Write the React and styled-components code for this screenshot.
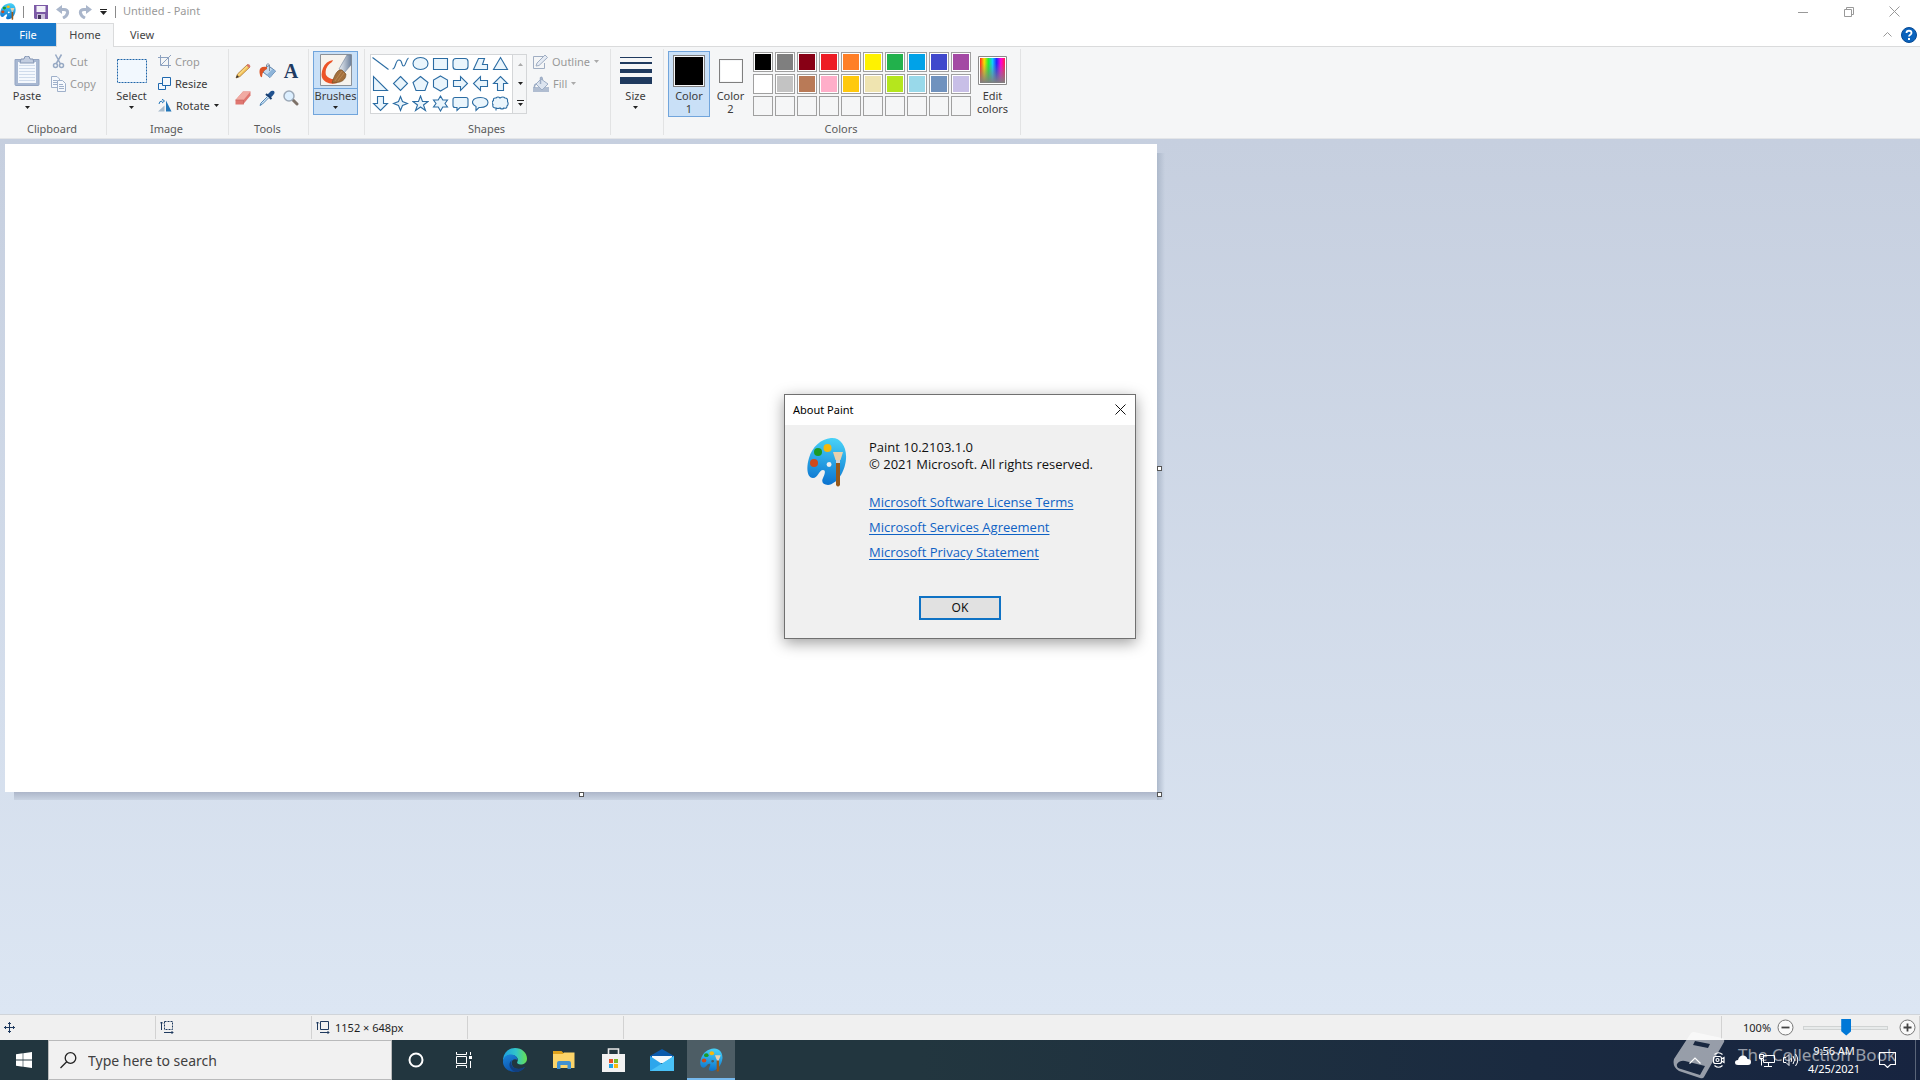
import React, { useState } from "react";
import styled, { createGlobalStyle, css } from "styled-components";

const GlobalStyle = createGlobalStyle`
  *, *::before, *::after { box-sizing: border-box; }
  body { margin: 0; overflow: hidden; font-family: "Noto Sans", "Open Sans", sans-serif; font-size: 11px; line-height: 13px; color: #3c3c3c; }
  button, input { font: inherit; color: inherit; margin: 0; padding: 0; border: 0; background: none; border-radius: 0; }
  svg { display: block; flex: none; }
`;

const Desktop = styled.div`
  position: relative;
  height: 100vh;
  display: flex;
  flex-direction: column;
`;

/* ---------- title bar ---------- */
const TitleBar = styled.header`
  height: 23px;
  display: flex;
  align-items: center;
  background: #fff;
`;
const QuickTools = styled.div`
  display: flex;
  align-items: center;
  gap: 8px;
  padding-left: 10px;
`;
const BarLine = styled.span`
  width: 1px;
  height: 12px;
  background: #8a8a8a;
  margin-left: ${(p) => p.$gap || 0}px;
`;
const IconButton = styled.button`
  display: flex;
  align-items: center;
  justify-content: center;
  width: ${(p) => p.$w || 14}px;
  height: ${(p) => p.$h || 20}px;
`;
const Title = styled.h1`
  flex: 1;
  margin: 0;
  padding: 0 0 2px 7px;
  font-size: 11px;
  line-height: 20px;
  font-weight: 400;
  color: #999;
`;
const WindowButtons = styled.div`
  display: flex;
  padding-right: 3px;
`;

/* ---------- tabs ---------- */
const Tabs = styled.nav`
  height: 24px;
  display: flex;
  background: #fff;
  border-bottom: 1px solid #dadbdc;
`;
const Tab = styled.button`
  width: ${(p) => p.$w}px;
  height: 23px;
  color: #444;
  ${(p) => p.$kind === "file" && css`background: #1979ca; color: #fff;`}
  ${(p) => p.$kind === "active" && css`
    height: 24px;
    background: #f5f6f7;
    border: 1px solid #dadbdc;
    border-bottom: 0;
    padding-bottom: 2px;
  `}
`;
const TabsEnd = styled.div`
  margin-left: auto;
  display: flex;
  align-items: center;
  gap: 7px;
  padding-right: 3px;
`;

/* ---------- ribbon ---------- */
const Ribbon = styled.section`
  display: flex;
  height: 92px;
  background: #f5f6f7;
  border-bottom: 1px solid #e3e5e8;
`;
const Group = styled.section`
  display: flex;
  flex-direction: column;
  width: ${(p) => p.$w}px;
  padding-top: 4px;
  background: linear-gradient(#e2e3e4, #e2e3e4) right 2px / 1px 86px no-repeat;
`;
const GroupBody = styled.div`
  display: flex;
  height: 68px;
  padding-left: ${(p) => p.$pad || 0}px;
  gap: ${(p) => p.$gap || 0}px;
`;
const GroupName = styled.h2`
  margin: 3px 3px 0 0;
  text-align: center;
  font-size: 11px;
  line-height: 14px;
  font-weight: 400;
  color: #5a5a5a;
`;
const BigButton = styled.button`
  width: ${(p) => p.$w}px;
  height: ${(p) => p.$h || 66}px;
  display: flex;
  flex-direction: column;
  align-items: center;
  white-space: nowrap;
  border: 1px solid transparent;
  ${(p) => p.$on && css`background: #c9e0f7; border-color: #71a5dc;`}
`;
const BigIcon = styled.span`
  height: 37px;
  display: flex;
  align-items: center;
  justify-content: center;
`;
const BrushIcon = styled(BigIcon)`
  align-self: stretch;
  border-bottom: 1px solid #71a5dc;
`;
const Stack = styled.div`
  display: flex;
  flex-direction: column;
`;
const SmallButton = styled.button`
  height: 22px;
  padding-bottom: 1px;
  display: flex;
  align-items: center;
  gap: ${(p) => p.$gap || 4}px;
  white-space: nowrap;
  color: ${(p) => (p.$off ? "#999" : "#3c3c3c")};
`;
const ToolGrid = styled.div`
  display: grid;
  grid-template-columns: repeat(3, 24px);
  grid-auto-rows: 27px;
  padding-top: 6px;
`;
const Gallery = styled.div`
  display: flex;
  width: 157px;
  height: 60px;
  margin: 3px 6px 0 0;
  border: 1px solid #d4d6d8;
  background: #fff;
`;
const ShapeGrid = styled.div`
  display: grid;
  grid-template-columns: repeat(7, 20px);
  grid-auto-rows: 20px;
  width: 141px;
`;
const GalleryScroll = styled.div`
  display: flex;
  flex-direction: column;
  width: 14px;
  background: #f5f6f7;
  border-left: 1px solid #d4d6d8;
`;
const ShapeButton = styled.button`
  width: 19px;
  height: 17px;
  display: grid;
  place-items: center;
`;
const ColorWell = styled.span`
  width: ${(p) => p.$s}px;
  height: ${(p) => p.$s}px;
  border: 1px solid #7f7f7f;
  background: ${(p) => p.$c};
  box-shadow: inset 0 0 0 1px #f5f6f7;
`;
const Palette = styled.div`
  display: grid;
  grid-template-columns: repeat(10, 20px);
  grid-auto-rows: 20px;
  gap: 2px;
  padding: 1px 0 0 2px;
`;
const Swatch = styled.button`
  border: 1px solid #a0a0a0;
  background: ${(p) => p.$c || "#f5f6f7"};
  box-shadow: inset 0 0 0 1px ${(p) => (p.$c ? "#fff" : "#f5f6f7")};
`;

/* ---------- drawing area ---------- */
const Workspace = styled.main`
  flex: 1;
  min-height: 0;
  padding: 5px;
  background: linear-gradient(#c6cfdf, #dce6f3);
`;
const Sheet = styled.div`
  position: relative;
  width: 1152px;
  height: 648px;
  background: #fff;
  &::before, &::after { content: ""; position: absolute; }
  &::before { left: 100%; top: 9px; width: 8px; bottom: -8px; background: linear-gradient(90deg, #adb9cb, #adb9cb00); }
  &::after { top: 100%; left: 9px; height: 8px; right: 0; background: linear-gradient(#adb6c9, #c9d3e2); }
`;
const Handle = styled.span`
  position: absolute;
  z-index: 1;
  width: 5px;
  height: 5px;
  border: 1px solid #555;
  background: #fff;
  left: ${(p) => p.$x};
  top: ${(p) => p.$y};
`;

/* ---------- status bar ---------- */
const StatusBar = styled.footer`
  height: 26px;
  display: flex;
  border-top: 1px solid #d0d4d9;
  background: #f0f0f0;
  color: #1e1e1e;
`;
const StatusCell = styled.div`
  width: 156px;
  display: flex;
  align-items: center;
  gap: 5px;
  padding-left: 4px;
  margin: 1px 0;
  border-right: 1px solid #d2d2d2;
`;
const Zoom = styled.div`
  margin: 1px 0 1px auto;
  width: 199px;
  display: flex;
  align-items: center;
  padding-left: 21px;
  border-left: 1px solid #d2d2d2;
  border-right: 1px solid #d2d2d2;
`;
const ZoomValue = styled.span`
  width: 34px;
`;
const ZoomSlider = styled.input`
  appearance: none;
  width: 85px;
  height: 18px;
  margin: 0 11px 0 9px;
  &::-webkit-slider-runnable-track { height: 4px; background: #e7eaea; border: 1px solid #d0d3d3; }
  &::-webkit-slider-thumb {
    appearance: none;
    width: 10px;
    height: 17px;
    margin-top: -8px;
    background: #0078d7;
    clip-path: polygon(0 0, 100% 0, 100% 75%, 50% 100%, 0 75%);
  }
`;

/* ---------- taskbar ---------- */
const Taskbar = styled.footer`
  position: relative;
  height: 40px;
  display: flex;
  background: linear-gradient(90deg, #22363f 0%, #22363f 48%, #1a2a40 80%, #172440 100%);
  color: #fff;
`;
const TaskButton = styled.button`
  width: ${(p) => p.$w || 48}px;
  height: 40px;
  display: grid;
  place-items: center;
  ${(p) => p.$on && css`background: #4d5d65; box-shadow: inset 0 -2px #76b9ed;`}
`;
const Search = styled.label`
  width: 344px;
  display: flex;
  align-items: center;
  gap: 11px;
  padding-left: 11px;
  background: #f1f1f1;
  border: 1px solid #b9babb;
`;
const SearchInput = styled.input`
  flex: 1;
  min-width: 0;
  font-size: 14px;
  outline: 0;
  &::placeholder { color: #404040; opacity: 1; }
`;
const Pinned = styled.div`
  display: flex;
  padding-left: 3px;
  gap: 1px;
`;
const Tray = styled.div`
  position: relative;
  margin-left: auto;
  display: flex;
  padding-right: 4px;
`;
const Clock = styled.button`
  width: 62px;
  height: 40px;
  line-height: 18px;
  text-align: center;
  white-space: nowrap;
`;
const DesktopEdge = styled.button`
  width: 1px;
  margin-left: 6px;
  background: #5a6579;
`;
const Watermark = styled.div`
  position: absolute;
  right: 24px;
  bottom: 1px;
  display: flex;
  align-items: flex-start;
  gap: 13px;
  opacity: 0.55;
  pointer-events: none;
  color: #fff;
`;
const WatermarkText = styled.span`
  padding-top: 12px;
  font-size: 17px;
  line-height: 22px;
  white-space: nowrap;
`;

/* ---------- dialog ---------- */
const DialogLayer = styled.div`
  position: absolute;
  inset: 0 0 48px;
  display: grid;
  place-items: center;
  pointer-events: none;
`;
const Dialog = styled.section`
  width: 352px;
  pointer-events: auto;
  border: 1px solid #707070;
  background: #f0f0f0;
  color: #111;
  box-shadow: 0 4px 14px rgba(0, 0, 0, 0.38);
`;
const DialogHead = styled.header`
  height: 30px;
  display: flex;
  align-items: center;
  justify-content: space-between;
  padding: 0 4px 0 8px;
  background: #fff;
  color: #000;
`;
const DialogTitle = styled.h2`
  margin: 0;
  font-size: 11px;
  font-weight: 400;
`;
const DialogBody = styled.div`
  display: grid;
  grid-template-columns: 62px 1fr;
  padding: 12px 0 0 22px;
  font-family: "Open Sans", "Noto Sans", sans-serif;
  font-size: 13px;
  line-height: 17px;
`;
const DialogText = styled.p`
  margin: 2px 0 0;
`;
const Links = styled.div`
  display: flex;
  flex-direction: column;
  align-items: flex-start;
  gap: 8px;
  padding-top: 21px;
`;
const Link = styled.a`
  color: #0f62c4;
  text-decoration: underline;
  text-underline-offset: 2px;
`;
const DialogFoot = styled.div`
  display: flex;
  justify-content: center;
  padding: 35px 0 18px;
`;
const OkButton = styled.button`
  width: 82px;
  height: 24px;
  background: #e1e1e1;
  border: 2px solid #0f72c4;
  font-size: 12px;
  color: #111;
`;

/* ---------- drawings ---------- */
const Arrow = ({ c = "#222" }) => (
  <svg width="5" height="3" viewBox="0 0 5 3"><path d="M0 0h5L2.500 3z" fill={c} /></svg>
);
const BigArrow = styled.span`
  padding-top: 4px;
`;

const PaintIcon = ({ w, h, id }) => (
  <svg width={w} height={h} viewBox="0 0 40 50" preserveAspectRatio="none">
    <defs>
      <linearGradient id={id} x1="0.6" y1="0" x2="0.5" y2="1">
        <stop offset="0" stopColor="#48d2f7" /><stop offset="1" stopColor="#0a72cf" />
      </linearGradient>
    </defs>
    <path fillRule="evenodd" fill={`url(#${id})`} d="M24 1C33 0 40 9 39 22c-1 13-9 25-18 26-5 0-7-3-5-7 2-4 3-8 0-8-4 0-5 8-10 8C0 41-1 31 2 21 5 10 14 2 24 1zM22 25a2.500 2.500 0 1 0 .1 5 2.500 2.500 0 0 0-.1-5z" />
    <circle cx="20.500" cy="11" r="4" fill="#f5b90c" /><circle cx="11" cy="15" r="4" fill="#1c9a25" /><circle cx="7" cy="26" r="4" fill="#cf4a1c" />
    <path d="M29 25h4v23q-2 3-4 0z" fill="#96591b" /><path d="M29 22h4v4h-4z" fill="#cfd3d6" /><path d="M26 15h10l-2.500 8h-5z" fill="#ead0ac" />
  </svg>
);
const SaveIcon = () => (
  <svg width="14" height="14" viewBox="0 0 14 14"><path d="M0 0h14v14H1l-1-1z" fill="#7c5aa6" /><path d="M2.500 1h9v6h-9z" fill="#f3f1f8" /><path d="M3 9h8v5H3z" fill="#c9bfd9" /><path d="M4 10h3v4H4z" fill="#44345e" /></svg>
);
const UndoIcon = ({ flip }) => (
  <svg width="14" height="14" viewBox="0 0 14 14"><g transform={flip ? "translate(14 0) scale(-1 1)" : undefined} fill="none" stroke="#aab6cb" strokeWidth="3"><path d="M3 4.500h5c5 0 5 5.500-1 8.500" /><path d="M6 0v9L0 4.500z" fill="#aab6cb" stroke="none" /></g></svg>
);
const PasteIcon = () => (
  <svg width="26" height="30" viewBox="0 0 26 30"><path d="M1 3.500h24v25q0 1-1 1H2q-1 0-1-1z" fill="#a8b8d2" stroke="#93a5c3" /><path d="M4 6h18v21H4z" fill="#f4f8fd" /><path d="M5 9.500h16M5 12.500h16M5 15.500h16M5 18.500h16M5 21.500h16M5 24.500h16" stroke="#cfdbeb" /><path d="M7 3h3a3 3 0 0 1 6 0h3l1 4H6z" fill="#c2cde0" stroke="#8597b5" /></svg>
);
const CutIcon = () => (
  <svg width="14" height="15" viewBox="0 0 14 15" fill="none" stroke="#97a9c4" strokeWidth="1.500"><path d="M4.500.5L9.500 10M10.500.5L5 10" /><circle cx="4.500" cy="11.500" r="2" /><circle cx="10.500" cy="11.500" r="2" /></svg>
);
const CopyIcon = () => (
  <svg width="15" height="16" viewBox="0 0 15 16" fill="#f6f9fd" stroke="#9fb0ca"><path d="M.5.500H6L8.500 3v8.500h-8z" /><path d="M2 4.500h4M2 6.500h4M2 8.500h4" /><path d="M6.500 4.500h5l3 3v8h-8z" /><path d="M8 8.500h4M8 10.500h5M8 12.500h5" /></svg>
);
const SelectIcon = () => (
  <svg width="30" height="24" viewBox="0 0 30 24"><path d="M.5.500h29v23H.5z" fill="#f2f8fe" stroke="#1f65a8" strokeDasharray="2 1" /></svg>
);
const CropIcon = () => (
  <svg width="13" height="13" viewBox="0 0 13 13" fill="none" stroke="#8da2c0"><path d="M2.500 0v10.500H13M0 2.500h10.500V13M3 10l7-7M10 3l3-3" /></svg>
);
const ResizeIcon = () => (
  <svg width="13" height="13" viewBox="0 0 13 13" fill="#f5f9fd" stroke="#1f68ae"><path d="M.5 6.500h7v6h-7z" /><path d="M4.500.500h8v8h-8z" /></svg>
);
const RotateIcon = () => (
  <svg width="14" height="13" viewBox="0 0 14 13"><path d="M8 12.500V1.500l5.500 11z" fill="#2376b9" /><path d="M6.500 12.500V6.500L0 12.500z" fill="#a8bccd" /><path d="M1 5q0-3 3.500-3M4 0l2.500 2L4 4" fill="none" stroke="#2376b9" /></svg>
);
const Pencil = () => (
  <svg width="16" height="16" viewBox="0 0 16 16"><path d="M1 15l1.500-4L12.500 1.500 15 4 5 13.500z" fill="#f5c65c" stroke="#a56d28" strokeWidth=".7" /><path d="M3.500 12L13 2.500" stroke="#fbe6a3" /><path d="M11.500 2.500l1.500-1.500q2 0 2.500 2.500L14 5z" fill="#d9776a" /><path d="M1 15l1-3 2 2z" fill="#333" /></svg>
);
const Bucket = () => (
  <svg width="17" height="16" viewBox="0 0 17 16"><path d="M9 2.500l7.500 5.500L11 14.500 4 9z" fill="#c3dbf0" stroke="#587ea8" /><path d="M11 14.500l5.500-6.500-3 -2-6 6z" fill="#8db4d9" /><path d="M7.500 6V2q1.500-3 3 0v6" fill="none" stroke="#7b8a9c" /><path d="M8 4Q0 3 .5 9 1 15 3 14q0-6 5-8z" fill="#dd5426" /></svg>
);
const TextTool = styled.span`
  font: 700 20px/18px "Liberation Serif", serif;
  color: #1f3b63;
`;
const Eraser = () => (
  <svg width="16" height="14" viewBox="0 0 16 14"><path d="M.5 9L8 .5h7.500v4L8 13.500H.5z" fill="#df7670" /><path d="M.5 9L8 .5h7.500L8.500 9z" fill="#f1aba3" /><path d="M.5 9h8v4.500" fill="none" stroke="#c75f5c" strokeWidth=".6" /></svg>
);
const Dropper = () => (
  <svg width="16" height="16" viewBox="0 0 16 16"><path d="M8 5l4-4q3-1 3.500 1T11 8z" fill="#21528f" /><path d="M7 4l5.500 5" stroke="#173c6e" strokeWidth="2" /><path d="M8.500 6.500L2 13l-1 2.500L3.500 14l6.500-6.500" fill="#cfe6f7" stroke="#467cae" strokeWidth=".9" /></svg>
);
const Magnifier = () => (
  <svg width="16" height="16" viewBox="0 0 16 16"><path d="M9.500 9.500L14 14" stroke="#7d7168" strokeWidth="3" strokeLinecap="round" /><circle cx="6" cy="6" r="5" fill="#dcefff" stroke="#9ca9b8" strokeWidth="1.500" /></svg>
);
const BrushPic = () => (
  <svg width="32" height="32" viewBox="0 0 32 32"><defs><linearGradient id="bh"><stop stopColor="#eef2f6" /><stop offset="1" stopColor="#70839e" /></linearGradient></defs><path d="M.5.500h31v31H.5z" fill="#f6f3ee" stroke="#8b9198" /><path d="M19 15L27 1h4v10l-7 8z" fill="url(#bh)" stroke="#71839a" strokeWidth=".6" /><path d="M13 6Q6 7 3 14-1 24 6 28q5 3 11 1l0-4Q9 26 6 21 4 13 12 8z" fill="#ec5428" /><path d="M12 29q1-4 3-8 3-6 7-5l4 4q0 6-6 8-4 1-8 1z" fill="#a36f3b" stroke="#704920" strokeWidth=".6" /><path d="M15 27l7-10M18 27l6-8" stroke="#c99963" strokeWidth=".6" /></svg>
);
const OutlineIcon = () => (
  <svg width="15" height="14" viewBox="0 0 15 14" fill="none" stroke="#a0aec3"><path d="M10 1.500H.5v12h11V8" /><path d="M3 11l1-3 8-8 2.500 2.500-8.500 8z" fill="#e5ebf4" /></svg>
);
const FillIcon = () => (
  <svg width="16" height="16" viewBox="0 0 16 16"><path d="M0 11h16v5H0z" fill="#b0bdd1" /><path d="M8 3l7 5-6 6-6-6z" fill="#dce4ef" stroke="#9dadc5" /><path d="M4 8Q1 8 1.500 12M7.500 8V2q1.500-2 2 2" fill="none" stroke="#9dadc5" strokeWidth="1.500" /></svg>
);
const SizeIcon = () => (
  <svg width="32" height="27" viewBox="0 0 32 27" fill="#1f3a5f"><path d="M0 0h32v1H0zM0 5h32v2H0zM0 12h32v4H0zM0 20h32v7H0z" /></svg>
);
const Rainbow = () => (
  <svg width="29" height="29" viewBox="0 0 29 29"><defs><linearGradient id="hue">{["#f22", "#fd0", "#2e3", "#1cf", "#22f", "#f0d", "#f24"].map((c, i) => <stop key={c} offset={i / 6} stopColor={c} />)}</linearGradient><linearGradient id="gr" x2="0" y2="1"><stop offset=".2" stopColor="#808080" stopOpacity="0" /><stop offset="1" stopColor="#808080" /></linearGradient></defs><path d="M.5.500h28v28H.5z" fill="#fff" stroke="#8a8a8a" /><path d="M2 2h25v25H2z" fill="url(#hue)" /><path d="M2 2h25v25H2z" fill="url(#gr)" /></svg>
);

const shapes = [
  ["Line", "M.5 2.500l16 12"],
  ["Curve", "M.5 14C4 14 3 5 7 5s2 6 4.500 6S14 4 16.500 3"],
  ["Oval", "M8.500 2.500c10 0 10 12 0 12s-10-12 0-12z"],
  ["Rectangle", "M1.500 3.500h14v11h-14z"],
  ["Rounded rectangle", "M4 3.500h9q3 0 3 3v5q0 3-3 3H4q-3 0-3-3v-5q0-3 3-3z"],
  ["Polygon", "M6.500 3.500h6l-2 6h5v5H1.500z"],
  ["Triangle", "M8.500 2.500l7 12h-14z"],
  ["Right triangle", "M1.500 1.500v14h14z"],
  ["Diamond", "M8.500 1.500l7 7-7 7-7-7z"],
  ["Pentagon", "M8.500 1.500l7.500 6-3 8h-9l-3-8z"],
  ["Hexagon", "M8.500 1l7 4v7l-7 4-7-4V5z"],
  ["Right arrow", "M1.500 5.500h7v-4l7 7-7 7v-4h-7z"],
  ["Left arrow", "M15.500 5.500h-7v-4l-7 7 7 7v-4h7z"],
  ["Up arrow", "M5.500 15.500v-7h-4l7-7 7 7h-4v7z"],
  ["Down arrow", "M5.500 1.500v7h-4l7 7 7-7h-4v-7z"],
  ["Four-point star", "M8.500 1.500l2 5 5 2-5 2-2 5-2-5-5-2 5-2z"],
  ["Five-point star", "M8.500 1l2 5.500h5.500L11.500 10l2 5.500-5-3.500-5 3.500 2-5.500L1 6.500h5.500z"],
  ["Six-point star", "M8.500 1l2.300 4h4.700l-2.500 3.500 2.500 3.500h-4.700l-2.300 4-2.300-4H1.500L4 8.500 1.500 5h4.700z"],
  ["Rounded callout", "M3 2.500h11q2 0 2 2v6q0 2-2 2H8l-3 3v-3H3q-2 0-2-2v-6q0-2 2-2z"],
  ["Oval callout", "M8.500 2.500c10 0 10 10 0 10H7l-3 3v-4c-6-3-4-9 4.500-9z"],
  ["Cloud callout", "M4 3q2-2 4 0 3-2 5 0 3 0 2.500 3.500 1.500 3-.5 4.500 0 3-3 2-2 2-4 0-2 1-4 0-4 0-3-3.500-2-2 .5-4Q1 2.500 4 3zM4 13.500v2"],
];
const Shape = ({ d }) => (
  <svg width="17" height="17" viewBox="0 0 17 17"><path d={d} fill={d.includes("z") ? "#eaf5fc" : "none"} stroke="#2b6ca3" strokeWidth="1.100" /></svg>
);

const palette = [
  "#000000", "#7f7f7f", "#880015", "#ed1c24", "#ff7f27", "#fff200", "#22b14c", "#00a2e8", "#3f48cc", "#a349a4",
  "#ffffff", "#c3c3c3", "#b97a57", "#ffaec9", "#ffc90e", "#efe4b0", "#b5e61d", "#99d9ea", "#7092be", "#c8bfe7",
  ...Array(10).fill(null),
];

const Line = ({ w, h, d, sw = 1, c = "#999" }) => (
  <svg width={w} height={h} viewBox={`0 0 ${w} ${h}`}><path d={d} fill="none" stroke={c} strokeWidth={sw} /></svg>
);
const RoundSign = ({ plus }) => (
  <svg width="17" height="17" viewBox="0 0 17 17"><circle cx="8.500" cy="8.500" r="7.500" fill="#fafafa" stroke="#777" /><path d={plus ? "M4.500 8.500h8M8.500 4.500v8" : "M4.500 8.500h8"} stroke="#444" strokeWidth="1.800" /></svg>
);
const Edge = () => (
  <svg width="24" height="24" viewBox="0 0 24 24"><defs><linearGradient id="e1" x1="0" y1=".4" x2="1" y2=".4"><stop stopColor="#1c9fe0" /><stop offset=".55" stopColor="#32c5c9" /><stop offset="1" stopColor="#68e04f" /></linearGradient><linearGradient id="e2" x1="0" y1="0" x2=".5" y2="1"><stop stopColor="#1b86dc" /><stop offset="1" stopColor="#0b4fa6" /></linearGradient></defs><path d="M0 11C1 4 6 0 12 0c7 0 12 5 12 10.500 0 4-3 6-6.500 6-3 0-4-1.500-3-3C16 10 12.500 7 8.500 7 4.500 7 1.500 9 0 13z" fill="url(#e1)" /><path d="M0 13C1 8 5 6 8.500 6.500c4 .5 6 3 6 5.500-4-2-7 1-5.500 5 2 5 8 5 13 2-2 3-6 5-10 5C5 24-.5 19 0 13z" fill="url(#e2)" /><path d="M9 12c-3 5 3 12 13 7-3 4-7 5-9.500 5C7 22 4 16 9 12z" fill="#123f7e" /></svg>
);
const Folder = () => (
  <svg width="22" height="18" viewBox="0 0 22 18"><path d="M0 0h8.500l2 2H21v5H0z" fill="#dfa21c" /><path d="M0 3h10l1-1.500h10.500V17H0z" fill="#fcd469" /><path d="M4 18v-6q0-2 2-2h10q2 0 2 2v6h-3.500v-4h-7v4z" fill="#4191d0" /></svg>
);
const Store = () => (
  <svg width="23" height="24" viewBox="0 0 23 24"><path d="M6.500 8V1h10v7" fill="none" stroke="#e9e9e9" strokeWidth="1.600" /><path d="M0 6h23v18H0z" fill="#f2f2f2" /><path d="M7 11h4v4H7z" fill="#e8502a" /><path d="M12 11h4v4h-4z" fill="#7db928" /><path d="M7 16h4v4H7z" fill="#22a4e8" /><path d="M12 16h4v4h-4z" fill="#fbb90e" /></svg>
);
const Mail = () => (
  <svg width="24" height="22" viewBox="0 0 24 22"><path d="M0 7l12-7 12 7v4H0z" fill="#0a59ab" /><path d="M2 7h20v7H2z" fill="#f4f8fb" /><path d="M0 7l12 8L24 7v15H0z" fill="#2ca6ec" /><path d="M0 22L24 7v15z" fill="#49c1f7" /></svg>
);
const TaskView = () => (
  <svg width="17" height="16" viewBox="0 0 17 16"><path d="M.5 0v2.500h10V0M.5 16v-2.500h10V16M.5 4.500h10v7H.5zM14.500 0v3M14.500 9v7" fill="none" stroke="#fff" /><path d="M13 4h3v3h-3z" fill="#fff" /></svg>
);
const Book = () => (
  <svg width="52" height="47" viewBox="0 0 52 47"><path fillRule="evenodd" fill="#fff" d="M18 1q1-1 3-1l28 6q3 1 2 4L31 45q-1 2-4 1L6 39Q-1 35 1 27zM22 9l15 3-2 4-15-3zM4 32q-1 4 4 5l19 6 5-9-20-5q-5-1-8 3z" /></svg>
);

export default function App() {
  const [zoom, setZoom] = useState(51);
  return (
    <>
      <GlobalStyle />
      <Desktop>
        <TitleBar>
          <PaintIcon w={16} h={17} id="pt" />
          <BarLine $gap={7} />
          <QuickTools>
            <IconButton aria-label="Save"><SaveIcon /></IconButton>
            <IconButton aria-label="Undo"><UndoIcon /></IconButton>
            <IconButton aria-label="Redo"><UndoIcon flip /></IconButton>
            <IconButton aria-label="Customize" $w={7}>
              <svg width="7" height="6" viewBox="0 0 7 6"><path d="M0 0h7v1H0zM0 2h7L3.500 6z" fill="#222" /></svg>
            </IconButton>
          </QuickTools>
          <BarLine $gap={8} />
          <Title>Untitled - Paint</Title>
          <WindowButtons>
            <IconButton aria-label="Minimize" $w={46}><Line w={10} h={10} d="M0 5.500h10" /></IconButton>
            <IconButton aria-label="Restore" $w={45}><Line w={10} h={10} d="M.5 2.500h7v7h-7zM2.500 2V.5h7v7H8" /></IconButton>
            <IconButton aria-label="Close" $w={46}><Line w={11} h={11} d="M.5.500l10 10M10.500.500l-10 10" /></IconButton>
          </WindowButtons>
        </TitleBar>

        <Tabs>
          <Tab $w={56} $kind="file">File</Tab>
          <Tab $w={58} $kind="active">Home</Tab>
          <Tab $w={56}>View</Tab>
          <TabsEnd>
            <IconButton aria-label="Collapse ribbon"><Line w={9} h={5} d="M.5 4.500l4-4 4 4" /></IconButton>
            <IconButton aria-label="Help" $w={16}>
              <svg width="16" height="16" viewBox="0 0 16 16"><circle cx="8" cy="8" r="7.500" fill="#0b63bd" stroke="#084a94" /><path d="M5.500 6c0-3 5-3 5 0 0 1.700-2.500 1.700-2.500 3.500" fill="none" stroke="#fff" strokeWidth="1.800" /><path d="M7 11h2v2H7z" fill="#fff" /></svg>
            </IconButton>
          </TabsEnd>
        </Tabs>

        <Ribbon>
          <Group $w={107}>
            <GroupBody $pad={7} $gap={4}>
              <BigButton $w={40}><BigIcon><PasteIcon /></BigIcon>Paste<BigArrow><Arrow /></BigArrow></BigButton>
              <Stack>
                <SmallButton $off $gap={5}><CutIcon />Cut</SmallButton>
                <SmallButton $off><CopyIcon />Copy</SmallButton>
              </Stack>
            </GroupBody>
            <GroupName>Clipboard</GroupName>
          </Group>

          <Group $w={122}>
            <GroupBody $pad={4} $gap={6}>
              <BigButton $w={41}><BigIcon><SelectIcon /></BigIcon>Select<BigArrow><Arrow /></BigArrow></BigButton>
              <Stack>
                <SmallButton $off><CropIcon />Crop</SmallButton>
                <SmallButton><ResizeIcon />Resize</SmallButton>
                <SmallButton><RotateIcon />Rotate<Arrow /></SmallButton>
              </Stack>
            </GroupBody>
            <GroupName>Image</GroupName>
          </Group>

          <Group $w={80}>
            <GroupBody $pad={2}>
              <ToolGrid>
                <IconButton $w={24} $h={27} aria-label="Pencil"><Pencil /></IconButton>
                <IconButton $w={24} $h={27} aria-label="Fill with color"><Bucket /></IconButton>
                <IconButton $w={24} $h={27} aria-label="Text"><TextTool>A</TextTool></IconButton>
                <IconButton $w={24} $h={27} aria-label="Eraser"><Eraser /></IconButton>
                <IconButton $w={24} $h={27} aria-label="Color picker"><Dropper /></IconButton>
                <IconButton $w={24} $h={27} aria-label="Magnifier"><Magnifier /></IconButton>
              </ToolGrid>
            </GroupBody>
            <GroupName>Tools</GroupName>
          </Group>

          <Group $w={56}>
            <GroupBody $pad={4}>
              <BigButton $w={45} $h={64} $on><BrushIcon><BrushPic /></BrushIcon>Brushes<BigArrow><Arrow /></BigArrow></BigButton>
            </GroupBody>
          </Group>

          <Group $w={246}>
            <GroupBody $pad={5}>
              <Gallery>
                <ShapeGrid>
                  {shapes.map(([name, d]) => <ShapeButton key={name} aria-label={name}><Shape d={d} /></ShapeButton>)}
                </ShapeGrid>
                <GalleryScroll>
                  <IconButton aria-label="Scroll up"><svg width="5" height="3" viewBox="0 0 5 3"><path d="M0 3h5L2.500 0z" fill="#aaa" /></svg></IconButton>
                  <IconButton aria-label="Scroll down"><Arrow /></IconButton>
                  <IconButton aria-label="More shapes"><svg width="7" height="6" viewBox="0 0 7 6"><path d="M0 0h7v1H0zM1 3h5L3.500 6z" fill="#222" /></svg></IconButton>
                </GalleryScroll>
              </Gallery>
              <Stack>
                <SmallButton $off><OutlineIcon />Outline<Arrow c="#aaa" /></SmallButton>
                <SmallButton $off><FillIcon />Fill<Arrow c="#aaa" /></SmallButton>
              </Stack>
            </GroupBody>
            <GroupName>Shapes</GroupName>
          </Group>

          <Group $w={53}>
            <GroupBody $pad={3}>
              <BigButton $w={43}><BigIcon><SizeIcon /></BigIcon>Size<BigArrow><Arrow /></BigArrow></BigButton>
            </GroupBody>
          </Group>

          <Group $w={357}>
            <GroupBody $pad={4}>
              <BigButton $w={42} $on><BigIcon><ColorWell $s={32} $c="#000" /></BigIcon>Color<br />1</BigButton>
              <BigButton $w={41}><BigIcon><ColorWell $s={24} $c="#fff" /></BigIcon>Color<br />2</BigButton>
              <Palette>
                {palette.map((c, i) => <Swatch key={i} $c={c} aria-label={c || "Custom color"} />)}
              </Palette>
              <BigButton $w={43}><BigIcon><Rainbow /></BigIcon>Edit<br />colors</BigButton>
            </GroupBody>
            <GroupName>Colors</GroupName>
          </Group>
        </Ribbon>

        <Workspace>
          <Sheet>
            <Handle $x="100%" $y="calc(50% - 2px)" />
            <Handle $x="100%" $y="100%" />
            <Handle $x="calc(50% - 2px)" $y="100%" />
          </Sheet>
        </Workspace>

        <StatusBar>
          <StatusCell><Line w={11} h={11} c="#1f3a5f" d="M5.500 0v11M0 5.500h11M4 2l1.500-1.500L7 2M4 9l1.500 1.500L7 9M2 4L.5 5.500 2 7M9 4l1.500 1.500L9 7" /></StatusCell>
          <StatusCell>
            <svg width="14" height="13" viewBox="0 0 14 13" fill="none" stroke="#1f3a5f"><path d="M1.500 1v8M0 2.500L1.500 1 3 2.500M4 11.500h9M11.500 10l1.500 1.500-1.500 1.500" /><path d="M4.500.500h8v8h-8z" strokeDasharray="2 1" /></svg>
          </StatusCell>
          <StatusCell>
            <svg width="14" height="13" viewBox="0 0 14 13" fill="none" stroke="#1f3a5f"><path d="M1.500 1v8M0 2.500L1.500 1 3 2.500M4 11.500h9M11.500 10l1.500 1.500-1.500 1.500M4.500.500h8v8h-8z" /></svg>
            1152 × 648px
          </StatusCell>
          <StatusCell />
          <Zoom>
            <ZoomValue>100%</ZoomValue>
            <IconButton $w={17} aria-label="Zoom out"><RoundSign /></IconButton>
            <ZoomSlider type="range" aria-label="Zoom" value={zoom} onChange={(e) => setZoom(+e.target.value)} />
            <IconButton $w={17} aria-label="Zoom in"><RoundSign plus /></IconButton>
          </Zoom>
        </StatusBar>

        <Taskbar>
          <TaskButton aria-label="Start">
            <svg width="16" height="16" viewBox="0 0 16 16" fill="#fff"><path d="M0 2.300l6.700-1v6.300H0zM7.300 1.200L16 0v7.600H7.300zM0 8.400h6.700v6.300l-6.700-1zM7.300 8.400H16V16l-8.700-1.200z" /></svg>
          </TaskButton>
          <Search>
            <svg width="17" height="17" viewBox="0 0 17 17" fill="none" stroke="#222" strokeWidth="1.300"><circle cx="10.500" cy="6" r="5.300" /><path d="M6.700 9.800L.5 16" /></svg>
            <SearchInput aria-label="Search" placeholder="Type here to search" />
          </Search>
          <TaskButton aria-label="Cortana">
            <svg width="16" height="16" viewBox="0 0 16 16"><circle cx="8" cy="8" r="6.500" fill="none" stroke="#fff" strokeWidth="2" /></svg>
          </TaskButton>
          <TaskButton aria-label="Task view"><TaskView /></TaskButton>
          <Pinned>
            <TaskButton aria-label="Edge"><Edge /></TaskButton>
            <TaskButton aria-label="File Explorer"><Folder /></TaskButton>
            <TaskButton aria-label="Store"><Store /></TaskButton>
            <TaskButton aria-label="Mail"><Mail /></TaskButton>
            <TaskButton aria-label="Paint" $on><PaintIcon w={23} h={24} id="pk" /></TaskButton>
          </Pinned>
          <Watermark><Book /><WatermarkText>The Collection Book</WatermarkText></Watermark>
          <Tray>
            <TaskButton $w={24} aria-label="Hidden icons"><Line w={12} h={7} c="#fff" sw={1.2} d="M.5 6.500l5.500-5.500 5.500 5.500" /></TaskButton>
            <TaskButton $w={24} aria-label="Meet now">
              <svg width="12" height="16" viewBox="0 0 12 16" fill="none" stroke="#fff" strokeWidth="1.200"><path d="M2.500 4.500h4q2 0 2 2v3q0 2-2 2h-4q-2 0-2-2v-3q0-2 2-2zM8.500 7L11 5.500v5L8.500 9M1.500 2.500q4-3.500 8 0M1.500 13.500q4 3.500 8 0" /><circle cx="4.500" cy="8" r="1.500" /></svg>
            </TaskButton>
            <TaskButton $w={24} aria-label="OneDrive">
              <svg width="16" height="10" viewBox="0 0 16 10"><path d="M3 10Q0 10 0 7.500T3 5q1-4.500 5-4.500 3.500 0 4.500 3.500 3.500 0 3.500 3t-3 3z" fill="#fff" /></svg>
            </TaskButton>
            <TaskButton $w={24} aria-label="Network">
              <svg width="16" height="14" viewBox="0 0 16 14" fill="none" stroke="#fff"><path d="M5 2.500h10.500v7H4.500V6M.5 1.500h4v4h-4zM2.500 5.500v7M9.500 10v3M5 13.500h8" /></svg>
            </TaskButton>
            <TaskButton $w={24} aria-label="Volume">
              <svg width="16" height="14" viewBox="0 0 16 14" fill="none" stroke="#fff"><path d="M.5 4.500h2.500l3-3v11l-3-3H.5zM8 5q1.500 2 0 4M10 3q3 4 0 8M12.500 1q4.500 6 0 12" /></svg>
            </TaskButton>
            <Clock>9:56 AM<br />4/25/2021</Clock>
            <TaskButton $w={44} aria-label="Notifications"><Line w={17} h={16} c="#fff" sw={1.2} d="M.5.500h16v12h-5l-3 3-3-3h-5z" /></TaskButton>
            <DesktopEdge aria-label="Show desktop" />
          </Tray>
        </Taskbar>

        <DialogLayer>
          <Dialog role="dialog" aria-label="About Paint">
            <DialogHead>
              <DialogTitle>About Paint</DialogTitle>
              <IconButton aria-label="Close dialog" $w={22}><Line w={11} h={11} c="#111" d="M.5.500l10 10M10.500.500l-10 10" /></IconButton>
            </DialogHead>
            <DialogBody>
              <PaintIcon w={40} h={50} id="pd" />
              <div>
                <DialogText>Paint 10.2103.1.0<br />© 2021 Microsoft. All rights reserved.</DialogText>
                <Links>
                  <Link href="#license">Microsoft Software License Terms</Link>
                  <Link href="#services">Microsoft Services Agreement</Link>
                  <Link href="#privacy">Microsoft Privacy Statement</Link>
                </Links>
              </div>
            </DialogBody>
            <DialogFoot><OkButton>OK</OkButton></DialogFoot>
          </Dialog>
        </DialogLayer>
      </Desktop>
    </>
  );
}
